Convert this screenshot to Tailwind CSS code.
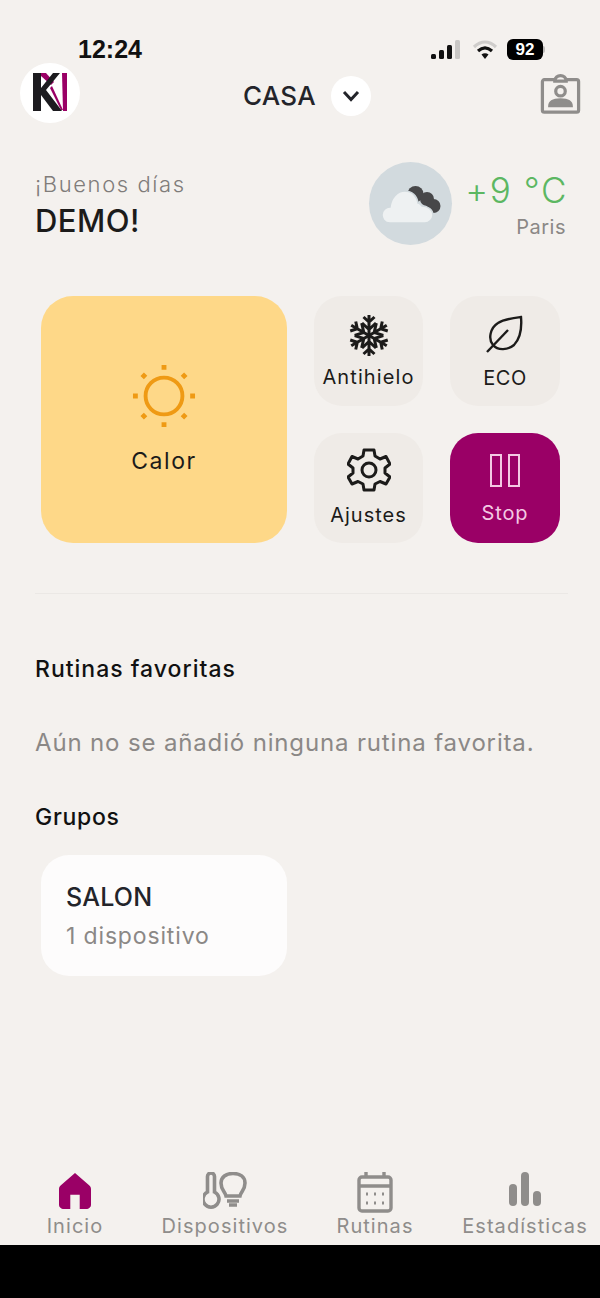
<!DOCTYPE html>
<html lang="es">
  <head>
    <meta charset="UTF-8" />
    <meta name="viewport" content="width=device-width, initial-scale=1.0" />
    <title>Inicio</title>
    <script src="https://cdn.jsdelivr.net/npm/@tailwindcss/browser@4"></script>
  </head>
  <body class="bg-black">
    <div class="flex h-[1298px] w-[600px] flex-col overflow-hidden font-['Inter',sans-serif] text-[#1c1b1a]">
      <div class="flex h-[1245px] flex-col bg-[#f4f1ee]">
        <!-- status bar -->
        <div class="flex h-[63px] items-end justify-between pl-[78px] pr-[55px]">
          <span class="font-['Liberation_Sans',sans-serif] text-[25px] font-bold leading-[28px] text-[#111]">12:24</span>
          <div class="flex items-center gap-[9px] pb-[3px]">
            <svg width="30" height="20" viewBox="0 0 30 20">
              <rect x="1" y="14" width="5" height="5" rx="1.5" fill="#111" />
              <rect x="9" y="10" width="5" height="9" rx="1.5" fill="#111" />
              <rect x="17" y="5" width="5" height="14" rx="1.5" fill="#111" />
              <rect x="25" y="0" width="5" height="19" rx="1.5" fill="#c9c7c5" />
            </svg>
            <svg width="26" height="20" viewBox="0 0 26 20" class="ml-[3px]">
              <path d="M2 7C9 0.5 17 0.5 24 7" fill="none" stroke="#cfcdcb" stroke-width="3.2" />
              <path d="M6 11C10.5 7 15.5 7 20 11" fill="none" stroke="#111" stroke-width="3.2" />
              <path d="M9.5 14.5C11.5 12.7 14.5 12.7 16.5 14.5L13 19Z" fill="#111" />
            </svg>
            <div class="flex items-center">
              <div class="flex h-[21px] w-[36px] items-center justify-center rounded-[6px] bg-black font-['Liberation_Sans',sans-serif] text-[17px] font-bold text-white">92</div>
              <div class="h-[7px] w-[2px] rounded-r bg-[#bdbbb9]"></div>
            </div>
          </div>
        </div>
        <!-- header -->
        <div class="flex h-[60px] items-center justify-between pl-[20px] pr-[19px]">
          <div class="flex h-[60px] w-[60px] items-center justify-center rounded-full bg-white">
            <svg width="36" height="40" viewBox="0 0 36 40">
              <path d="M30 0H35V38H31Z" fill="#9a0066" />
              <path d="M9 0H14L22 9L19 12L9 3Z" fill="#9a0066" />
              <path d="M18 15L20 13L31 37H29Z" fill="#9a0066" />
              <path d="M1 0H9V15L21 0H28L14 17L30 38H21L9 22V38H1Z" fill="#1c1b1f" />
            </svg>
          </div>
          <div class="flex items-center gap-[15px] pt-[6px] pr-[6px]">
            <span class="text-[26px] leading-[32px] font-medium tracking-[0.3px] text-[#23242a]">CASA</span>
            <div class="flex h-[40px] w-[40px] items-center justify-center rounded-full bg-white">
              <svg width="18" height="12" viewBox="0 0 18 12"><path d="M2 2L9 9.5L16 2" fill="none" stroke="#23242a" stroke-width="3" /></svg>
            </div>
          </div>
          <svg width="41" height="40" viewBox="0 0 42 42" class="mt-[2px]" fill="none" stroke="#8f8d8b" stroke-width="3.4">
            <path d="M15 6H4a2 2 0 0 0-2 2V38a2 2 0 0 0 2 2H38a2 2 0 0 0 2-2V8a2 2 0 0 0-2-2H27" />
            <path d="M15 7.5C15 3.5 18 1.8 21 1.8S27 3.5 27 7.5Z" />
            <circle cx="21" cy="18" r="5" />
            <path d="M9 34C9 28.5 14 26.5 21 26.5S33 28.5 33 34Z" fill="#8f8d8b" stroke-width="2" />
          </svg>
        </div>
        <!-- greeting and weather -->
        <div class="mt-[39px] flex h-[83px] items-start justify-between pl-[35px] pr-[32px]">
          <div class="pt-[8px]">
            <div class="text-[22px] leading-[28px] font-light tracking-[1.6px] text-[#7f7c7a]">¡Buenos días</div>
            <div class="mt-[3px] text-[31px] leading-[40px] font-medium tracking-[0.5px]">DEMO!</div>
          </div>
          <div class="flex gap-[13px]">
            <div class="flex h-[83px] w-[83px] items-center justify-center rounded-full bg-[#d2dade]">
              <svg width="66" height="46" viewBox="0 0 66 46">
                <circle cx="37.5" cy="13" r="8" fill="#474749" />
                <circle cx="49" cy="18" r="7" fill="#474749" />
                <circle cx="55.5" cy="25" r="7" fill="#474749" />
                <path d="M12 42C6 42 4 37 4 34C4 29 8 26 12 26C13 17 19 10 27 10C34 10 39 15 40 22C42 22 43 24 44 25C50 25 55 29 55 34C55 38 51 42 47 42Z" fill="#eef1f2" stroke="#d2dade" stroke-width="1.5" />
              </svg>
            </div>
            <div class="flex flex-col items-end">
              <div class="pt-[6px] text-[35px] leading-[44px] font-light tracking-[1.6px] text-[#5cb762]">+9 °C</div>
              <div class="mt-[2px] pr-[2px] text-[20px] leading-[26px] tracking-[0.5px] text-[#8b8886]">Paris</div>
            </div>
          </div>
        </div>
        <!-- modes -->
        <div class="mt-[51px] flex gap-[27px] pl-[41px]">
          <div class="flex h-[247px] w-[246px] flex-col items-center justify-center rounded-[32px] bg-[#fed888]">
            <svg width="64" height="64" viewBox="0 0 66 66" fill="none" stroke="#ef9a14">
              <circle cx="33" cy="33" r="19" stroke-width="4" />
              <path d="M33 1V6M33 60V65M1 33H6M60 33H65M10.5 10.5L14 14M52 52L55.5 55.5M10.5 55.5L14 52M52 14L55.5 10.5" stroke-width="5" />
            </svg>
            <span class="mt-[18px] text-[23px] leading-[30px] tracking-[1.6px]">Calor</span>
          </div>
          <div class="grid grid-cols-[109px_110px] grid-rows-[110px_110px] gap-x-[27px] gap-y-[27px]">
            <div class="flex flex-col items-center rounded-[28px] bg-[#efebe7] pt-[18px]">
              <svg width="42" height="43" viewBox="0 0 42 43" fill="none" stroke="#1c1b1a" stroke-width="3">
                <g id="snow-arm">
                  <path d="M21 21.5V1M15.5 3L21 8L26.5 3M14 9L21 15.5L28 9" />
                </g>
                <path d="M21 21.5V1M15.5 3L21 8L26.5 3M14 9L21 15.5L28 9" transform="rotate(60 21 21.5)" />
                <path d="M21 21.5V1M15.5 3L21 8L26.5 3M14 9L21 15.5L28 9" transform="rotate(120 21 21.5)" />
                <path d="M21 21.5V1M15.5 3L21 8L26.5 3M14 9L21 15.5L28 9" transform="rotate(180 21 21.5)" />
                <path d="M21 21.5V1M15.5 3L21 8L26.5 3M14 9L21 15.5L28 9" transform="rotate(240 21 21.5)" />
                <path d="M21 21.5V1M15.5 3L21 8L26.5 3M14 9L21 15.5L28 9" transform="rotate(300 21 21.5)" />
              </svg>
              <span class="mt-[7px] text-[20px] leading-[26px] tracking-[1.1px]">Antihielo</span>
            </div>
            <div class="flex flex-col items-center rounded-[28px] bg-[#efebe7] pt-[19px]">
              <svg width="38" height="38" viewBox="0 0 38 38" fill="none" stroke="#1c1b1a" stroke-width="2.4">
                <path d="M35 2C36 14 34 24 28 30C22 35 12 36 7 30C2 24 4 13 12 8C18 4 27 3 35 2Z" />
                <path d="M1 37L22 15" />
              </svg>
              <span class="mt-[12px] text-[20px] leading-[26px] tracking-[0.6px]">ECO</span>
            </div>
            <div class="flex flex-col items-center rounded-[28px] bg-[#efebe7] pt-[15px]">
              <svg width="44" height="44" viewBox="0 0 44 44" fill="none" stroke="#1c1b1a" stroke-width="3">
                <path d="M17 2H27L28 8L33 11L39 8.5L43 16L38 20V25L43 29L39 36L33 33.5L28 36L27 42H17L16 36L11 33.5L5 36L1 29L6 25V20L1 16L5 8.5L11 11L16 8Z" stroke-linejoin="round" />
                <circle cx="22" cy="22" r="7" />
              </svg>
              <span class="mt-[10px] text-[20px] leading-[26px] tracking-[1px]">Ajustes</span>
            </div>
            <div class="flex flex-col items-center rounded-[28px] bg-[#9a0066] pt-[21px]">
              <svg width="30" height="33" viewBox="0 0 30 33" fill="none" stroke="#f3c9e3" stroke-width="2">
                <rect x="1" y="1" width="10" height="31" />
                <rect x="19" y="1" width="10" height="31" />
              </svg>
              <span class="mt-[13px] text-[20px] leading-[26px] tracking-[0.9px] text-[#f3c9e3]">Stop</span>
            </div>
          </div>
        </div>
        <div class="mx-[35px] mt-[50px] h-px w-[533px] bg-[#ebe8e5]"></div>
        <!-- favourites -->
        <h2 class="mt-[60px] pl-[35px] text-[23px] leading-[30px] font-medium tracking-[1px] text-[#111]">Rutinas favoritas</h2>
        <p class="mt-[43px] pl-[35px] text-[24px] leading-[32px] tracking-[0.85px] text-[#8b8886]">Aún no se añadió ninguna rutina favorita.</p>
        <h2 class="mt-[43px] pl-[35px] text-[23px] leading-[30px] font-medium tracking-[0.7px] text-[#111]">Grupos</h2>
        <!-- groups -->
        <div class="ml-[41px] mt-[23px] flex h-[121px] w-[246px] flex-col justify-center rounded-[28px] bg-[#fdfcfc] pl-[25px]">
          <div class="text-[25px] leading-[32px] font-medium tracking-[0.2px] text-[#23242a]">SALON</div>
          <div class="mt-[8px] text-[23px] leading-[30px] tracking-[0.85px] text-[#8b8886]">1 dispositivo</div>
        </div>
        <!-- tab bar -->
        <div class="mt-auto grid grid-cols-4 pb-[6px] text-[20px] leading-[26px] tracking-[1.05px] text-[#8f8d8b]">
          <div class="flex flex-col items-center">
            <svg width="32" height="38" viewBox="0 0 34 38" fill="#9a0066" class="mb-[3px]">
              <path d="M17 0L32 13C33 14 34 15 34 17V34C34 36 32 38 30 38H22V23H12V38H4C2 38 0 36 0 34V17C0 15 1 14 2 13Z" />
            </svg>
            <span>Inicio</span>
          </div>
          <div class="flex flex-col items-center">
            <svg width="44" height="38" viewBox="0 0 44 38" fill="none" stroke="#8f8d8b" stroke-width="3.6" class="mb-[3px]">
              <path d="M4.5 4.5a3.5 3.5 0 0 1 7 0V20a8 8 0 1 1-7 0Z" />
              <path d="M23 24C22 19 18 18 18 11C18 5 23 1.5 30 1.5S42 5 42 11C42 18 38 19 37 24Z" />
              <path d="M24 29H36M26 33H34" />
            </svg>
            <span>Dispositivos</span>
          </div>
          <div class="flex flex-col items-center">
            <svg width="36" height="41" viewBox="0 0 36 41" fill="none" stroke="#8f8d8b" stroke-width="3.4">
              <rect x="2" y="5" width="32" height="34" rx="3" />
              <path d="M2 14H34M9 0V6M27 0V6" />
              <path d="M9 22H11M17 22H19M25 22H27M9 31H11M17 31H19M25 31H27" stroke-width="3" />
            </svg>
            <span>Rutinas</span>
          </div>
          <div class="flex flex-col items-center">
            <svg width="32" height="34" viewBox="0 0 32 34" fill="#8f8d8b" class="mb-[7px]">
              <rect x="0" y="12" width="8" height="22" rx="4" />
              <rect x="12" y="0" width="8" height="34" rx="4" />
              <rect x="24" y="19" width="8" height="15" rx="4" />
            </svg>
            <span>Estadísticas</span>
          </div>
        </div>
      </div>
    </div>
  </body>
</html>
